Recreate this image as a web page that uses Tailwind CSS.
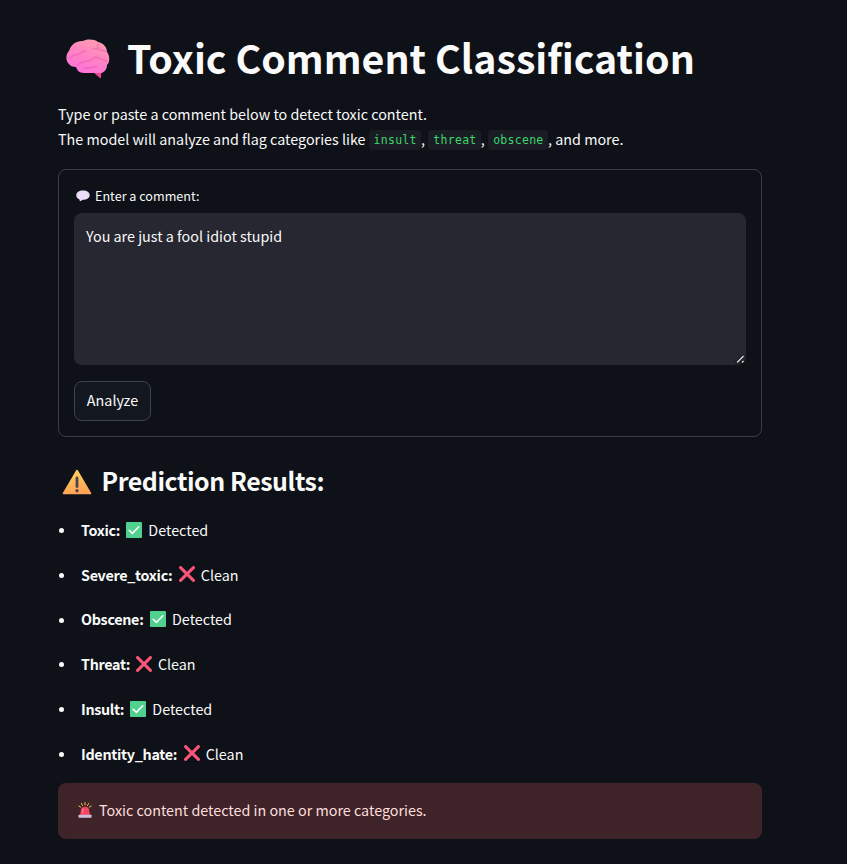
<!DOCTYPE html>
<html lang="en">
<head>
<meta charset="utf-8">
<title>Toxic Comment Classification</title>
<script src="https://cdn.jsdelivr.net/npm/@tailwindcss/browser@4"></script>
</head>
<body class="bg-[#0e1117] text-[#fafafa] h-[864px] overflow-hidden font-['Noto_Sans_CJK_SC','Noto_Sans',sans-serif] text-[14.33px]">
<svg class="hidden">
  <defs>
    <symbol id="check" viewBox="0 0 16 16"><rect width="16" height="16" rx="1" fill="#50d18f"/><path d="M3.2 8.3 6.4 11.4 12.8 4.8" fill="none" stroke="#fff" stroke-width="1.6" stroke-linecap="round" stroke-linejoin="round"/></symbol>
    <symbol id="cross" viewBox="0 0 16 16"><path d="M1.6 1.6 14.4 14.4M14.4 1.6 1.6 14.4" fill="none" stroke="#f95579" stroke-width="3.1" stroke-linecap="round"/></symbol>
  </defs>
</svg>
<main class="ml-[58px] w-[704px] pt-[30px]">
  <h1 class="flex h-[53px] items-center pl-2 text-[39.3px] font-bold leading-[53px] whitespace-nowrap">
    <svg class="mt-[5px] mr-[17px] h-[40px] w-[44px] shrink-0" viewBox="0 0 44 40">
      <defs>
        <linearGradient id="brain" x1=".8" y1="0" x2=".3" y2="1"><stop stop-color="#ff9fa9"/><stop offset=".5" stop-color="#ff83c5"/><stop offset="1" stop-color="#ff70dc"/></linearGradient>
      </defs>
      <path d="M27 33 34.500 39.500Q36 37 34.500 32Z" fill="#f04596"/>
      <path d="M3 25C-1 21 0 15 3 12C5 5 11 1.500 17 2C22 0 28 0 32 3C38 4 41 9 41 13C44 17 44 23 41 26C41 31 37 35 33 34H18C13 34 11 31 10 28C7 28 4 27 3 25Z" fill="url(#brain)"/>
      <path d="M3 19C6 18 7 16 9 16C14 16 15 12 20 12M12 26C15 21 22 25 29 18M27 10C31 8 33 12 40 12M33 5C31 6 31 8 32 9M29 18C34 18 36 22 41 22M18 29C23 31 26 27 31 28" fill="none" stroke="#e65aa8" stroke-opacity=".6" stroke-width="1.300" stroke-linecap="round"/>
    </svg>
    <span>Toxic Comment Classification</span>
  </h1>
  <div class="mt-[18px] leading-[25.6px] whitespace-nowrap">
    <p>Type or paste a comment below to detect toxic content.</p>
    <p class="-mt-px flex"><span>The model will analyze and flag categories like</span><code class="mt-[4px] ml-[3px] h-5 rounded bg-[#1a1c24] pr-[4.300px] pl-[5px] font-['DejaVu_Sans_Mono',monospace] text-[11.5px] tracking-[0.280px] leading-[21px] text-[#3dd56d]">insult</code><span>,</span><code class="mt-[4px] ml-[3.300px] h-5 rounded bg-[#1a1c24] pr-[4.300px] pl-[5px] font-['DejaVu_Sans_Mono',monospace] text-[11.5px] tracking-[0.280px] leading-[21px] text-[#3dd56d]">threat</code><span>,</span><code class="mt-[4px] ml-[3.300px] h-5 rounded bg-[#1a1c24] pr-[4.500px] pl-[5px] font-['DejaVu_Sans_Mono',monospace] text-[11.5px] tracking-[0.280px] leading-[21px] text-[#3dd56d]">obscene</code><span>, and more.</span></p>
  </div>
  <form class="mt-[17.800px] h-[268px] rounded-lg border border-[#3b3d45] px-[15px] pt-[14px]">
    <label class="flex h-6 items-center pl-[2px] text-[12.6px] leading-6">
      <svg class="mr-[5px] h-3 w-[14px]" viewBox="0 0 14 12"><path d="M7 .5c4 0 6.700 2 6.700 4.700S11 9.700 7 9.700L4 11.300l-.8-2.100C1.200 8.400.3 7 .3 5.200.3 2.500 3 .5 7 .5Z" fill="#e9def6"/></svg>
      <span>Enter a comment:</span>
    </label>
    <div class="relative mt-[5px] h-[152px] rounded-lg bg-[#262730] px-3 pt-[11px] leading-6">
      <span>You are just a fool idiot stupid</span>
      <svg class="absolute right-0 bottom-0 h-3 w-3" viewBox="0 0 12 12"><path d="M2 10 9 3M7 10 9 8" stroke="#111218" stroke-width="3"/><path d="M3 9.500 9.500 3M8 9.500 9.500 8" stroke="#ddd" stroke-width="1.500"/></svg>
    </div>
    <button type="button" class="mt-4 block h-10 w-[77px] rounded-lg border border-[#41434a] bg-[#131720] pb-[2px] text-center leading-[36px]">Analyze</button>
  </form>
  <h2 class="mt-[26px] flex h-[34px] items-center pl-[4px] text-[24.9px] font-bold tracking-[-0.440px] leading-[34px] whitespace-nowrap">
    <svg class="mt-[5px] mr-[9.500px] h-[26px] w-[30px] shrink-0" viewBox="0 0 30 26"><defs><linearGradient id="warn" x1=".4" y1="0" x2=".6" y2="1"><stop stop-color="#ffd15b"/><stop offset="1" stop-color="#ffa156"/></linearGradient></defs><path d="M15 1.500 28.500 24.500H1.500Z" fill="url(#warn)" stroke="url(#warn)" stroke-width="1.600" stroke-linejoin="round"/><path d="M15 9V17.500" stroke="#4c4250" stroke-width="2.800" stroke-linecap="round"/><circle cx="15" cy="21.700" r="1.600" fill="#4c4250"/></svg>
    <span>Prediction Results:</span>
  </h2>
  <ul class="mt-[19.800px] flex flex-col gap-[19.200px] leading-[25.600px] whitespace-nowrap">
    <li class="flex items-center"><i class="mt-[2px] mr-[17px] ml-px h-[5px] w-[5px] rounded-full bg-[#fafafa]"></i><b class="tracking-[-0.320px]">Toxic:</b><svg class="mr-[6.300px] ml-[6px] h-4 w-4"><use href="#check"/></svg><span>Detected</span></li>
    <li class="flex items-center"><i class="mt-[2px] mr-[17px] ml-px h-[5px] w-[5px] rounded-full bg-[#fafafa]"></i><b class="tracking-[-0.300px]">Severe_toxic:</b><svg class="mr-[6px] ml-[6.500px] h-4 w-4"><use href="#cross"/></svg><span>Clean</span></li>
    <li class="flex items-center"><i class="mt-[2px] mr-[17px] ml-px h-[5px] w-[5px] rounded-full bg-[#fafafa]"></i><b class="tracking-[-0.300px]">Obscene:</b><svg class="mr-[6px] ml-[6.500px] h-4 w-4"><use href="#check"/></svg><span>Detected</span></li>
    <li class="flex items-center"><i class="mt-[2px] mr-[17px] ml-px h-[5px] w-[5px] rounded-full bg-[#fafafa]"></i><b class="tracking-[-0.320px]">Threat:</b><svg class="mr-[6px] ml-[5.800px] h-4 w-4"><use href="#cross"/></svg><span>Clean</span></li>
    <li class="flex items-center"><i class="mt-[2px] mr-[17px] ml-px h-[5px] w-[5px] rounded-full bg-[#fafafa]"></i><b class="tracking-[-0.320px]">Insult:</b><svg class="mr-[6.300px] ml-[5.800px] h-4 w-4"><use href="#check"/></svg><span>Detected</span></li>
    <li class="flex items-center"><i class="mt-[2px] mr-[17px] ml-px h-[5px] w-[5px] rounded-full bg-[#fafafa]"></i><b class="tracking-[-0.300px]">Identity_hate:</b><svg class="mr-[6px] ml-[6.500px] h-4 w-4"><use href="#cross"/></svg><span>Clean</span></li>
  </ul>
  <div class="mt-[16.600px] flex h-14 items-center rounded-lg bg-[#3e2428] pb-[2px] pl-5 text-[#ffdede]">
    <svg class="mr-[7px] h-4 w-[14px]" viewBox="0 0 14 16"><path d="M7 .5V3M3.500 1.500l1 2M10.500 1.500l-1 2M.8 4 2.800 5.200M13.200 4l-2 1.200" stroke="#f5bd55" stroke-width="1" stroke-linecap="round"/><path d="M2 13 3 7.500Q3.500 4.800 7 4.800T11 7.500L12 13Z" fill="#f64463"/><path d="M5 7 4.600 11" stroke="#ff8b98" stroke-linecap="round"/><rect x=".5" y="12.700" width="13" height="3" rx=".5" fill="#cdc0df"/></svg>
    <span>Toxic content detected in one or more categories.</span>
  </div>
</main>
</body>
</html>
